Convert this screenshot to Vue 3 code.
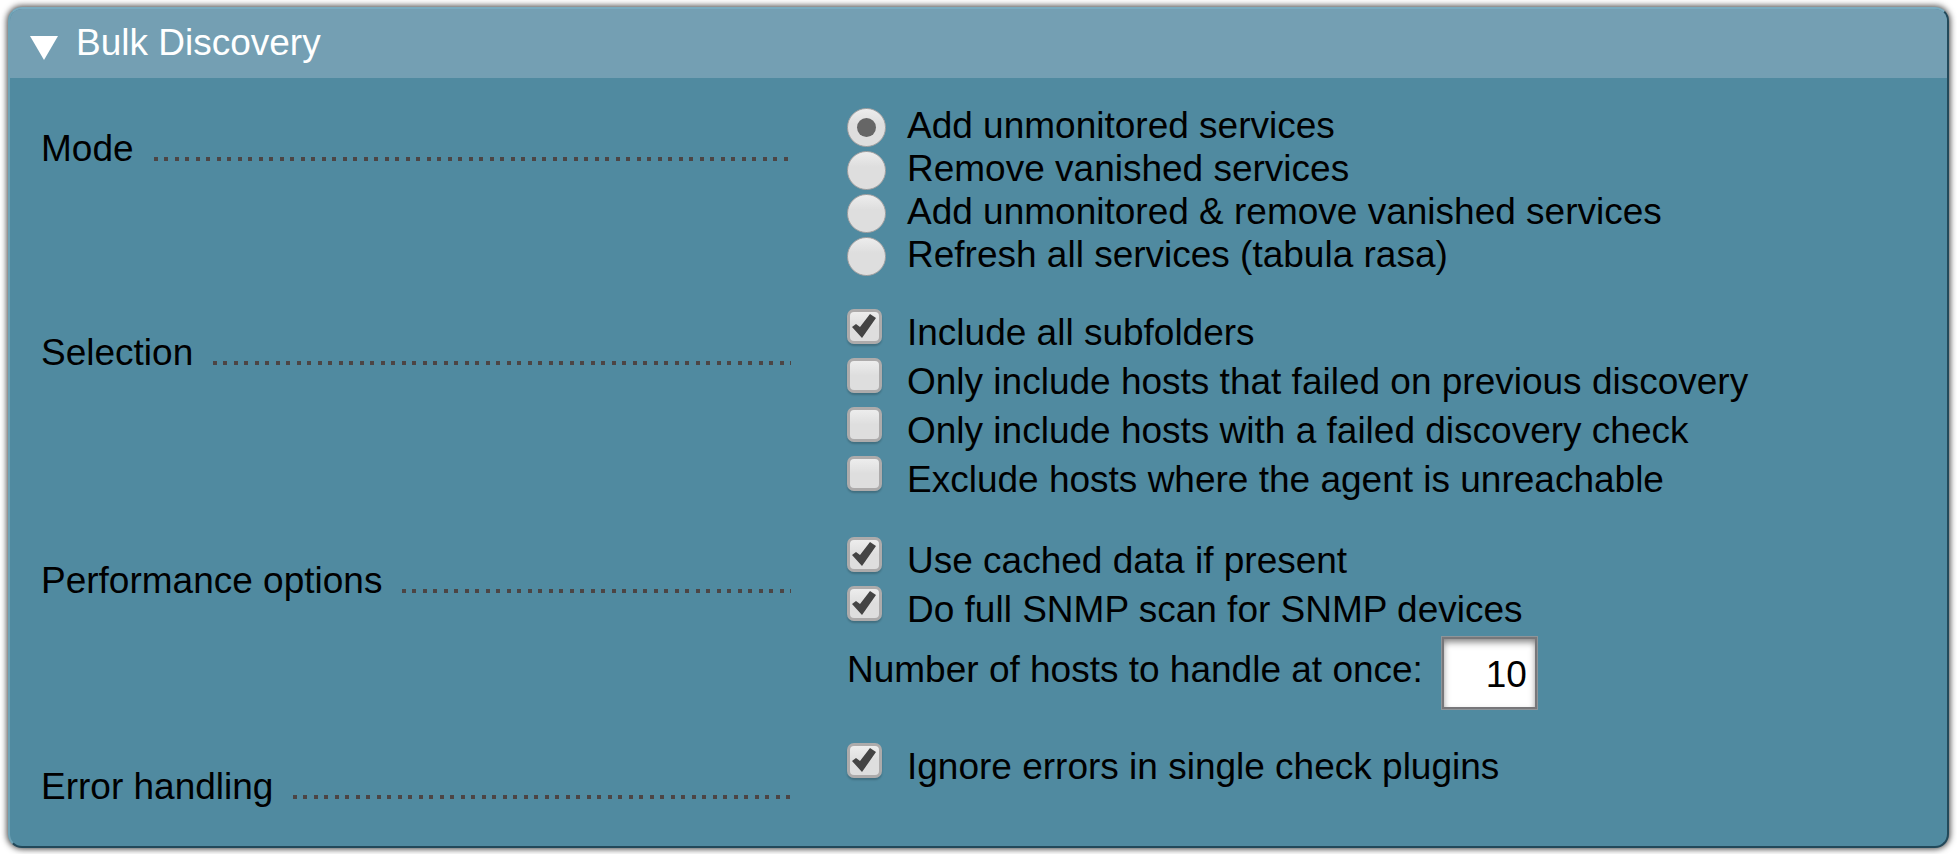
<script setup>
import { ref } from 'vue'

const open = ref(true)
const mode = ref('new')
const hostCount = ref('10')

const modes = [
  { value: 'new', label: 'Add unmonitored services' },
  { value: 'remove', label: 'Remove vanished services' },
  { value: 'fixall', label: 'Add unmonitored & remove vanished services' },
  { value: 'refresh', label: 'Refresh all services (tabula rasa)' },
]

const selection = ref([
  { id: 'subfolders', label: 'Include all subfolders', checked: true },
  { id: 'only-failed', label: 'Only include hosts that failed on previous discovery', checked: false },
  { id: 'failed-check', label: 'Only include hosts with a failed discovery check', checked: false },
  { id: 'skip-unreachable', label: 'Exclude hosts where the agent is unreachable', checked: false },
])

const performance = ref([
  { id: 'use-cache', label: 'Use cached data if present', checked: true },
  { id: 'snmp-scan', label: 'Do full SNMP scan for SNMP devices', checked: true },
])

const errors = ref([
  { id: 'ignore-errors', label: 'Ignore errors in single check plugins', checked: true },
])
</script>

<template>
  <form class="panel" @submit.prevent>
    <button type="button" class="header" :aria-expanded="open" @click="open = !open">
      <svg class="arrow" :class="{ closed: !open }" viewBox="0 0 28 24" aria-hidden="true">
        <path d="M0 0H28L14 24Z" fill="#fff" />
      </svg>
      <span>Bulk Discovery</span>
    </button>

    <div v-show="open" class="body">
      <div class="row" role="radiogroup" aria-labelledby="legend-mode">
        <div class="legend">
          <span id="legend-mode">Mode</span>
          <span class="leader" aria-hidden="true"></span>
        </div>
        <div>
          <label v-for="m in modes" :key="m.value" class="radio-line">
            <input v-model="mode" class="radio" type="radio" name="mode" :value="m.value" />
            <span>{{ m.label }}</span>
          </label>
        </div>
      </div>

      <div class="row" role="group" aria-labelledby="legend-selection">
        <div class="legend">
          <span id="legend-selection">Selection</span>
          <span class="leader" aria-hidden="true"></span>
        </div>
        <div>
          <label v-for="o in selection" :key="o.id" class="check-line">
            <input v-model="o.checked" class="check" type="checkbox" />
            <span>{{ o.label }}</span>
          </label>
        </div>
      </div>

      <div class="row" role="group" aria-labelledby="legend-performance">
        <div class="legend">
          <span id="legend-performance">Performance options</span>
          <span class="leader" aria-hidden="true"></span>
        </div>
        <div>
          <label v-for="o in performance" :key="o.id" class="check-line">
            <input v-model="o.checked" class="check" type="checkbox" />
            <span>{{ o.label }}</span>
          </label>
          <div class="number-line">
            <label for="host-count">Number of hosts to handle at once:</label>
            <input id="host-count" v-model="hostCount" class="number" type="text" inputmode="numeric" />
          </div>
        </div>
      </div>

      <div class="row" role="group" aria-labelledby="legend-errors">
        <div class="legend">
          <span id="legend-errors">Error handling</span>
          <span class="leader" aria-hidden="true"></span>
        </div>
        <div>
          <label v-for="o in errors" :key="o.id" class="check-line">
            <input v-model="o.checked" class="check" type="checkbox" />
            <span>{{ o.label }}</span>
          </label>
        </div>
      </div>
    </div>
  </form>
</template>

<style>
body {
  background: #fff;
}
</style>

<style scoped>
.panel {
  box-sizing: border-box;
  margin: 7px 8px;
  border: 2px solid;
  border-color: #7aabbf #22495a #22495a #70a3b6;
  border-radius: 14px;
  background: #508aa0;
  box-shadow: 0 0 6px 1px rgba(0, 0, 0, 0.75);
  color: #000;
  font-family: "Liberation Sans", Arial, sans-serif;
  font-size: 37px;
  line-height: 43px;
  overflow: hidden;
}

.header {
  display: flex;
  align-items: center;
  gap: 18px;
  width: 100%;
  margin: 0;
  padding: 12px 20px 14px;
  border: 0;
  background: #749fb3;
  color: #fff;
  font: inherit;
  text-align: left;
  cursor: pointer;
}

.arrow {
  width: 28px;
  height: 24px;
  margin-top: 10px;
}

.arrow.closed {
  transform: rotate(-90deg);
}

.body {
  display: grid;
  gap: 32px;
  padding: 26px 31px 38px;
}

.row {
  display: grid;
  grid-template-columns: 750px 1fr;
  column-gap: 56px;
}

.legend {
  display: flex;
  align-items: flex-start;
  gap: 20px;
  padding-top: 23px;
  white-space: nowrap;
}

/* Dotted line that leads from the legend to its values */
.leader {
  flex: 1;
  height: 4px;
  margin-top: 30px;
  background:
    linear-gradient(#4c4545, #4c4545) 0 0 / 4px 4px no-repeat,
    repeating-linear-gradient(
      to right,
      #4c4545 0 4px,
      transparent 4px 10px,
      #4c4545 10px 14px,
      transparent 14px 21px
    );
}

.radio-line,
.check-line {
  display: flex;
  white-space: nowrap;
}

.radio-line {
  gap: 21px;
  align-items: center;
  height: 43px;
}

.check-line {
  gap: 25px;
  height: 49px;
}

.check-line span {
  padding-top: 3px;
}

.radio,
.check {
  appearance: none;
  display: grid;
  flex: none;
  box-sizing: border-box;
  margin: 0;
}

.radio {
  place-items: center;
  width: 39px;
  height: 39px;
  margin-top: 4px;
  border: 1px solid #a6a3a3;
  border-radius: 50%;
  background: linear-gradient(#ededed, #dedede 40%, #dedede);
}

.radio:checked::after {
  content: "";
  width: 19px;
  height: 19px;
  border-radius: 50%;
  background: #666;
}

.check {
  width: 35px;
  height: 35px;
  margin-top: 1px;
  border: 3px solid #adabab;
  border-radius: 7px;
  background: linear-gradient(#ededed, #dedede 50%, #dedede);
  box-shadow: 0 2px 2px rgba(0, 0, 0, 0.2);
}

.check:checked::after {
  content: "";
  width: 29px;
  height: 29px;
  background: #444;
  clip-path: polygon(2px 15px, 6px 12px, 10px 15px, 20px 2px, 26px 6px, 12px 26px);
}

.number-line {
  display: flex;
  gap: 18px;
  padding-top: 2px;
  white-space: nowrap;
}

.number-line label {
  padding-top: 12px;
}

.number {
  box-sizing: border-box;
  width: 97px;
  height: 74px;
  margin: 0;
  padding: 3px 10px 0;
  border: 1px solid #8f9599;
  border-radius: 0;
  background: #fff;
  box-shadow:
    inset 0 0 0 2px #77777a,
    inset 0 4px 7px 1px rgba(0, 0, 0, 0.5);
  color: #000;
  font: inherit;
  text-align: right;
}
</style>
